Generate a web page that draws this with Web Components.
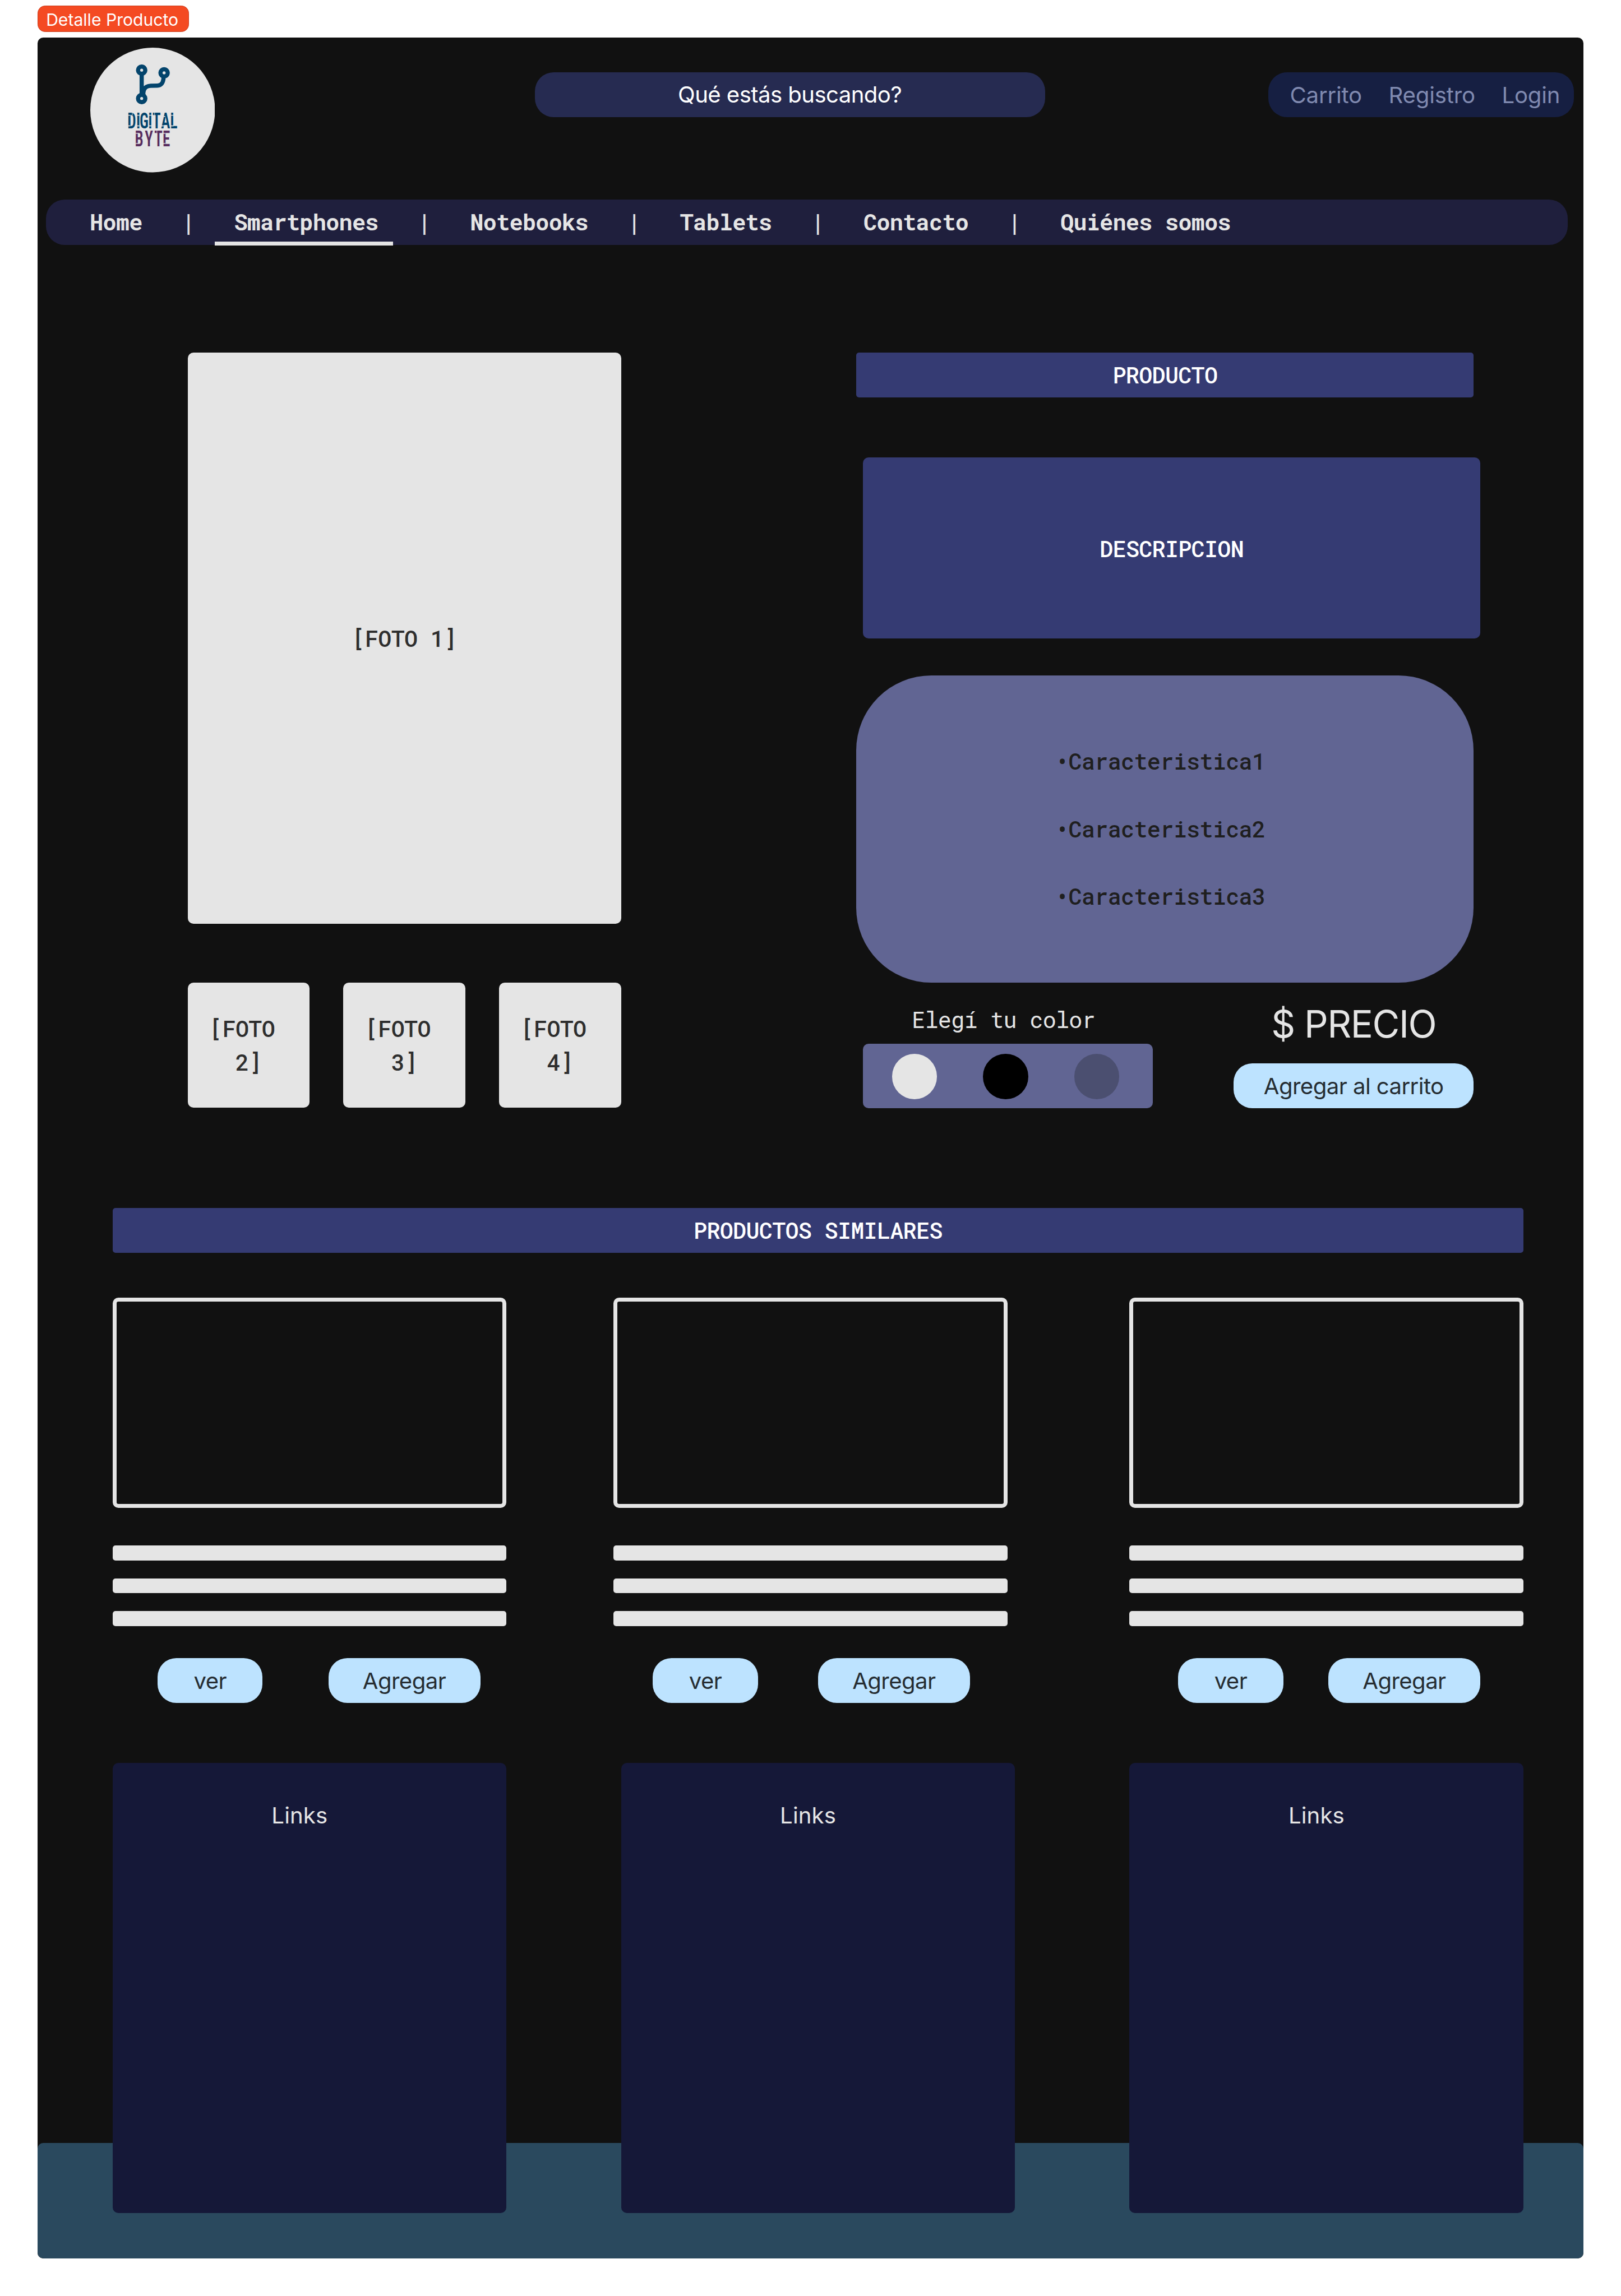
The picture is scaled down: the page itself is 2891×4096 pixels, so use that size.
<!DOCTYPE html>
<html lang="es">
<head>
<meta charset="utf-8">
<title>Detalle Producto</title>
<style>
  /* 1rem = 100 design units; the artboard is 34.56rem wide */
  html { font-size: 83.6516px; background: #fff; }
  body {
    margin: 0; width: 34.56rem; overflow: hidden;
    --sans: Inter, "Liberation Sans", sans-serif;
    --mono: "Roboto Mono", "DejaVu Sans Mono", monospace;
    --light: #e5e5e5; --brand: #353b73; --muted: #616593;
    font: 400 .48rem/.72rem var(--sans); letter-spacing: -.0145em; color: var(--light);
  }
</style>
</head>
<body>
<product-page></product-page>
<script>
const define = (name, css, html) => {
  const tpl = document.createElement('template');
  tpl.innerHTML = `<style>*,:host{box-sizing:border-box}${css}</style>${html}`;
  customElements.define(name, class extends HTMLElement {
    constructor() {
      super();
      this.attachShadow({ mode: 'open' }).append(tpl.content.cloneNode(true));
    }
  });
};

define('page-tag', `
  :host{display:flex;align-items:center;width:3.23rem;height:.56rem;padding:.05rem 0 0 .17rem;border:1px solid #c93d1d;
    border-radius:.16rem;background:#f44a22;color:#fff;font:400 .36rem/.44rem var(--sans);letter-spacing:0;white-space:nowrap}`,
  `<slot></slot>`);

define('brand-logo', `
  :host{display:block;width:2.66rem;height:2.66rem} svg{display:block;width:100%;height:100%}
  text{font-family:"Roboto Condensed",Roboto,sans-serif;font-size:46.5px;font-weight:600;letter-spacing:0}`,
  `<svg viewBox="192 102 266 266">
    <circle cx="325" cy="235" r="133" fill="#e5e5e5"/>
    <g fill="none" stroke="#03446c" stroke-width="9">
      <circle cx="301.6" cy="150" r="7.7"/><circle cx="349.4" cy="155.7" r="7.7"/><circle cx="301.6" cy="210.4" r="7.7"/>
      <path d="M301.6 158V203M305 203C304.5 189 311 183.8 321 183.4L335 183C344 182.6 348.2 177 348.4 163"/>
    </g>
    <g fill="#03446c"><text transform="translate(0 274) scale(.7 1)" x="387.6 414.5 424.5 450.6 463.8 490 517.6">DIGITAL</text></g>
    <g fill="#582d5e"><text transform="translate(0 312) scale(.7 1)" x="410 440.5 469.5 494.5">BYTE</text></g>
    <g fill="#e5e5e5">
      <path d="M272.500 245.500h5v1.600h-5zM291 245.500h6v1.600h-6zM316.500 245.500h6.500v1.600h-6.500zM364 245.500h6v1.600h-6zM348 248h4v1.600h-4z"/>
      <path d="M272.500 268h5v1.600h-5zM291 268h6v1.600h-6zM316.500 268h6.500v1.600h-6.500zM342 268h7v1.600h-7zM364 268h6v1.600h-6z"/>
      <path d="M289 284h5v1.500h-5zM346.500 284h6v1.500h-6zM289 305.500h5v1.500h-5zM346.500 305.500h6v1.500h-6z"/>
      <path d="M281.200 240h1v6h-1zM328.800 240h1v6h-1zM333.600 279h1v5h-1z"/>
    </g>
  </svg>`);

define('search-box', `
  :host{display:flex;align-items:center;justify-content:center;width:10.88rem;height:.96rem;padding-top:.01rem;border-radius:.4rem;background:#262b51;color:#fff}`,
  `<slot></slot>`);

define('account-links', `
  :host{display:flex;align-items:center;gap:.57rem;width:6.52rem;height:.96rem;padding:.02rem 0 0 .46rem;border-radius:.4rem;
    background:#161f42;color:#808ab0;letter-spacing:-.005em}`,
  `<slot></slot>`);

define('site-header', `
  :host{display:flex;align-items:flex-start;height:3.46rem;padding:.22rem .2rem 0 1.12rem}
  .search{margin:.52rem 0 0 6.82rem} .account{margin:.52rem 0 0 auto}`,
  `<brand-logo></brand-logo>
   <search-box class="search">Qué estás buscando?</search-box>
   <account-links class="account"><span>Carrito</span><span>Registro</span><span>Login</span></account-links>`);

define('nav-item', `
  :host{display:block;position:relative}
  :host([active])::after{content:"";position:absolute;left:-.41rem;width:3.8rem;top:.785rem;height:.08rem;background:var(--light)}`,
  `<slot></slot>`);

define('nav-bar', `
  :host{display:flex;align-items:center;gap:.839rem;height:.96rem;margin:0 .34rem 0 .18rem;padding:0 0 .02rem .935rem;
    border-radius:.4rem;background:#1f1f3d;font:700 .48rem/.72rem var(--mono);letter-spacing:-.0175em}`,
  `<nav-item>Home</nav-item><span>|</span><nav-item active>Smartphones</nav-item><span>|</span><nav-item>Notebooks</nav-item><span>|</span>
   <nav-item>Tablets</nav-item><span>|</span><nav-item>Contacto</nav-item><span>|</span><nav-item>Quiénes somos</nav-item>`);

define('photo-box', `
  :host{display:flex;align-items:center;justify-content:center;padding-top:.02rem;border-radius:.12rem;background:var(--light);color:#2e2e2e;
    font-family:var(--mono);font-weight:500;letter-spacing:-.0185em;white-space:break-spaces;text-align:center}`,
  `<slot></slot>`);

define('photo-gallery', `
  :host{display:flex;flex-direction:column;gap:1.26rem;width:9.24rem}
  .main{height:12.18rem} .row{display:flex;justify-content:space-between} .row photo-box{width:2.6rem;height:2.66rem}`,
  `<photo-box class="main">[FOTO 1]</photo-box>
   <div class="row"><photo-box>[FOTO&#32;&#10;2]</photo-box><photo-box>[FOTO&#32;&#10;3]</photo-box><photo-box>[FOTO&#32;&#10;4]</photo-box></div>`);

define('title-bar', `
  :host{display:flex;align-items:center;justify-content:center;height:.96rem;border-radius:.06rem;background:var(--brand);color:#fff;
    font-family:var(--mono);font-weight:500;letter-spacing:-.0185em}`,
  `<slot></slot>`);

define('product-description', `
  :host{display:flex;align-items:center;justify-content:center;height:3.86rem;padding-top:.02rem;border-radius:.12rem;background:var(--brand);color:#fff;
    font-family:var(--mono);font-weight:500;letter-spacing:-.0185em}`,
  `<slot></slot>`);

define('feature-list', `
  :host{display:flex;flex-direction:column;justify-content:center;gap:.72rem;height:6.56rem;padding-left:4.24rem;border-radius:1.6rem;
    background:var(--muted);color:#1f1f1f;font-family:var(--mono);font-weight:500;letter-spacing:-.0175em}`,
  `<slot></slot>`);

define('color-picker', `
  :host{display:block;width:6.18rem}
  .label{padding:.03rem 0 0 1.04rem;font:400 .48rem/.72rem var(--mono);letter-spacing:-.0185em}
  .swatches{display:flex;align-items:center;gap:.98rem;height:1.38rem;margin-top:.15rem;padding:.02rem 0 0 .62rem;border-radius:.12rem;background:var(--muted)}
  i{width:.96rem;height:.96rem;border-radius:50%;background:var(--c)}`,
  `<div class="label"><slot></slot></div>
   <div class="swatches"><i style="--c:#e5e5e5"></i><i style="--c:#000"></i><i style="--c:#4b4f70"></i></div>`);

define('pill-button', `
  :host{display:flex;align-items:center;justify-content:center;height:.96rem;padding-top:.02rem;border-radius:.4rem;background:#bde3ff;color:#262d32;
    white-space:nowrap}`,
  `<slot></slot>`);

define('price-box', `
  :host{display:block;width:5.12rem}
  .price{font-size:.8rem;line-height:.96rem;letter-spacing:-.022em;text-align:center}
  pill-button{margin-top:.36rem}`,
  `<div class="price"><slot></slot></div><pill-button>Agregar al carrito</pill-button>`);

define('product-info', `
  :host{display:block;width:13.3rem}
  title-bar,feature-list{width:13.16rem}
  product-description{width:13.16rem;margin:1.28rem 0 .78rem .14rem}
  .buy{display:flex;justify-content:space-between;padding:.4rem .14rem 0 .14rem}`,
  `<title-bar>PRODUCTO</title-bar>
   <product-description>DESCRIPCION</product-description>
   <feature-list><span>•Caracteristica1</span><span>•Caracteristica2</span><span>•Caracteristica3</span></feature-list>
   <div class="buy"><color-picker>Elegí tu color</color-picker><price-box>$ PRECIO</price-box></div>`);

define('product-card', `
  :host{display:block;width:8.4rem}
  .image{height:4.48rem;border:7px solid var(--light);border-radius:.12rem}
  .lines{display:flex;flex-direction:column;gap:.38rem;margin:.8rem 0 .68rem}
  .lines i{height:.32rem;border-radius:.06rem;background:var(--light)}
  .actions{display:flex;gap:var(--gap);padding-left:var(--inset)}
  .see{width:2.24rem} .add{width:3.24rem}`,
  `<div class="image"></div><div class="lines"><i></i><i></i><i></i></div>
   <div class="actions"><pill-button class="see">ver</pill-button><pill-button class="add">Agregar</pill-button></div>`);

define('similar-products', `
  :host{display:block;margin:0 1.28rem 0 1.6rem}
  .cards{display:grid;grid-template-columns:10.68rem 11rem 8.4rem;margin-top:.96rem}`,
  `<title-bar>PRODUCTOS SIMILARES</title-bar>
   <div class="cards">
     <product-card style="--inset:.96rem;--gap:1.4rem"></product-card>
     <product-card style="--inset:.84rem;--gap:1.28rem"></product-card>
     <product-card style="--inset:1.04rem;--gap:.96rem"></product-card>
   </div>`);

define('link-column', `
  :host{display:block;width:8.4rem;height:9.6rem;padding:.76rem 0 0 3.39rem;border-radius:.12rem;background:#151838;letter-spacing:.003em}`,
  `<slot></slot>`);

define('site-footer', `
  :host{display:grid;height:10.56rem}
  .band{grid-area:1/1;align-self:end;height:2.46rem;border-radius:.12rem;background:#2a495e}
  .columns{grid-area:1/1;display:flex;justify-content:space-between;align-items:flex-start;padding:0 1.28rem 0 1.6rem}`,
  `<div class="band"></div>
   <div class="columns"><link-column>Links</link-column><link-column>Links</link-column><link-column>Links</link-column></div>`);

define('product-page', `
  :host{display:block;height:48.96rem;padding:.12rem .8rem .8rem}
  .frame{height:47.36rem;margin-top:.12rem;border-radius:.12rem;overflow:hidden;background:#111}
  .product{display:flex;justify-content:space-between;height:16.12rem;margin:2.3rem 2.2rem 2.12rem 3.2rem}
  similar-products{height:10.56rem;margin-bottom:1.28rem}`,
  `<page-tag>Detalle Producto</page-tag>
   <div class="frame">
     <site-header></site-header>
     <nav-bar></nav-bar>
     <div class="product"><photo-gallery></photo-gallery><product-info></product-info></div>
     <similar-products></similar-products>
     <site-footer></site-footer>
   </div>`);
</script>
</body>
</html>
